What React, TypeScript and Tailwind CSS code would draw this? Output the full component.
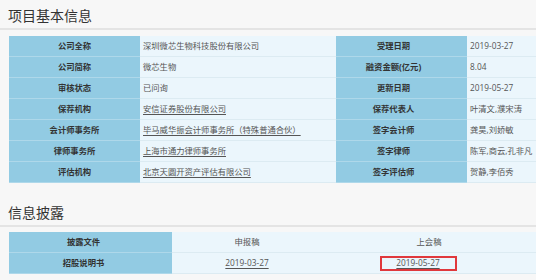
const font = "font-['Open_Sans','Noto_Sans_CJK_SC',sans-serif]";

type Cell = { text: string; link?: boolean };

const baseRows: [string, Cell, string, Cell][] = [
  ["公司全称", { text: "深圳微芯生物科技股份有限公司" }, "受理日期", { text: "2019-03-27" }],
  ["公司简称", { text: "微芯生物" }, "融资金额(亿元)", { text: "8.04" }],
  ["审核状态", { text: "已问询" }, "更新日期", { text: "2019-05-27" }],
  ["保荐机构", { text: "安信证券股份有限公司", link: true }, "保荐代表人", { text: "叶清文,濮宋涛" }],
  [
    "会计师事务所",
    { text: "毕马威华振会计师事务所（特殊普通合伙）", link: true },
    "签字会计师",
    { text: "龚昊,刘娇敏" },
  ],
  ["律师事务所", { text: "上海市通力律师事务所", link: true }, "签字律师", { text: "陈军,商云,孔非凡" }],
  ["评估机构", { text: "北京天圆开资产评估有限公司", link: true }, "签字评估师", { text: "贺静,李佰秀" }],
];

function SectionTitle({ children }: { children: string }) {
  return (
    <div className="h-[28px] border-b-2 border-[#e4e4e4] pl-[8px] pt-[4px] text-[14px] leading-[20px] text-[#333]">
      {children}
    </div>
  );
}

function Value({ cell, className }: { cell: Cell; className: string }) {
  return (
    <div
      className={`flex h-full items-center border-b border-[#dcebf2] bg-[#ebf6fc] pl-[3px] text-[8.3px] text-[#555] ${className}`}
    >
      <span className={`whitespace-nowrap ${cell.link ? "underline underline-offset-2" : ""}`}>{cell.text}</span>
    </div>
  );
}

function Label({ text, className }: { text: string; className: string }) {
  return (
    <div
      className={`flex h-full items-center justify-center border-b border-[#aed8ea] bg-[#92cbe3] text-[8.3px] font-bold text-[#333] ${className}`}
    >
      {text}
    </div>
  );
}

export default function App() {
  return (
    <div className={`h-[280px] w-[550px] overflow-hidden bg-white ${font}`}>
      <div className="h-full w-[536px] bg-[#f7f7f7] pt-[2px]">
        <SectionTitle>项目基本信息</SectionTitle>

        <div className="ml-[9px] mt-[6px] flex flex-col">
          {baseRows.map(([l1, v1, l2, v2]) => (
            <div key={l1} className="flex h-[21px]">
              <Label text={l1} className="w-[131px]" />
              <Value cell={v1} className="w-[196px]" />
              <Label text={l2} className="w-[131px] pr-[16px]" />
              <Value cell={v2} className="flex-1" />
            </div>
          ))}
        </div>

        <div className="mt-[16px]">
          <SectionTitle>信息披露</SectionTitle>
        </div>

        <div className="ml-[9px] mt-[5px] flex flex-col">
          <div className="flex h-[21px]">
            <Label text="披露文件" className="w-[163px] pr-[14px]" />
            <div className="flex h-full w-[150px] items-center justify-center border-b border-[#dcebf2] bg-[#ebf6fc] text-[8.3px] text-[#555]">
              申报稿
            </div>
            <div className="flex h-full flex-1 items-center justify-center border-b border-[#dcebf2] bg-[#ebf6fc] text-[8.3px] text-[#555]">
              上会稿
            </div>
          </div>
          <div className="flex h-[21px]">
            <Label text="招股说明书" className="w-[163px] pr-[14px]" />
            <div className="flex h-full w-[150px] items-center justify-center border-b border-[#dcebf2] bg-[#ebf6fc] text-[8.3px] text-[#555]">
              <span className="underline underline-offset-2">2019-03-27</span>
            </div>
            <div className="flex h-full flex-1 items-center justify-center border-b border-[#dcebf2] bg-[#ebf6fc] pr-[22px] text-[8.3px] text-[#555]">
              <span className="flex h-[15px] w-[77px] items-center justify-center border-2 border-[#e0383c] underline underline-offset-2">
                2019-05-27
              </span>
            </div>
          </div>
        </div>
      </div>
    </div>
  );
}
